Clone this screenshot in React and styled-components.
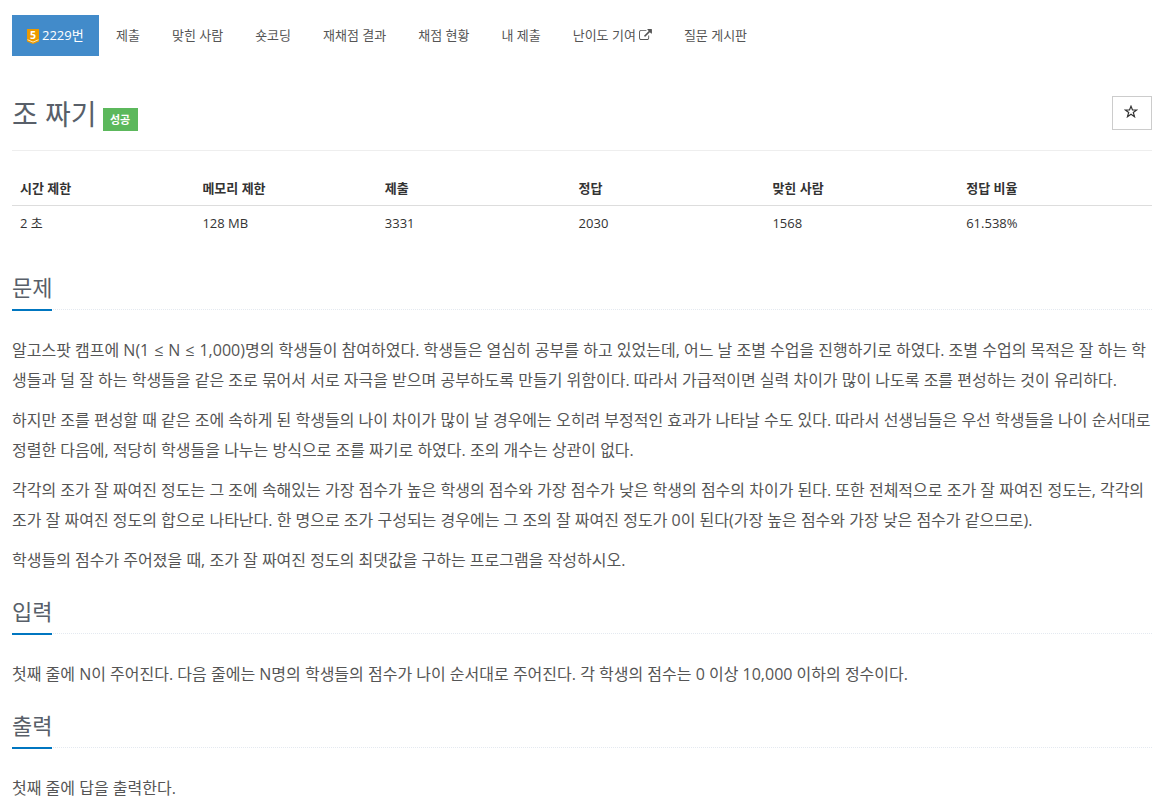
import React from 'react'
import styled, { createGlobalStyle } from 'styled-components'

const tabs = [
    { title: '제출' },
    { title: '맞힌 사람' },
    { title: '숏코딩' },
    { title: '재채점 결과' },
    { title: '채점 현황' },
    { title: '내 제출' },
    { title: '난이도 기여', external: true },
    { title: '질문 게시판' }
]

const limits = [
    { title: '시간 제한', value: '2 초', width: 16 },
    { title: '메모리 제한', value: '128 MB', width: 16 },
    { title: '제출', value: '3331', width: 17 },
    { title: '정답', value: '2030', width: 17 },
    { title: '맞힌 사람', value: '1568', width: 17 },
    { title: '정답 비율', value: '61.538%', width: 17 }
]

const sections = [
    {
        title: '문제',
        paragraphs: [
            '알고스팟 캠프에 N(1 ≤ N ≤ 1,000)명의 학생들이 참여하였다. 학생들은 열심히 공부를 하고 있었는데, 어느 날 조별 수업을 진행하기로 하였다. 조별 수업의 목적은 잘 하는 학생들과 덜 잘 하는 학생들을 같은 조로 묶어서 서로 자극을 받으며 공부하도록 만들기 위함이다. 따라서 가급적이면 실력 차이가 많이 나도록 조를 편성하는 것이 유리하다.',
            '하지만 조를 편성할 때 같은 조에 속하게 된 학생들의 나이 차이가 많이 날 경우에는 오히려 부정적인 효과가 나타날 수도 있다. 따라서 선생님들은 우선 학생들을 나이 순서대로 정렬한 다음에, 적당히 학생들을 나누는 방식으로 조를 짜기로 하였다. 조의 개수는 상관이 없다.',
            '각각의 조가 잘 짜여진 정도는 그 조에 속해있는 가장 점수가 높은 학생의 점수와 가장 점수가 낮은 학생의 점수의 차이가 된다. 또한 전체적으로 조가 잘 짜여진 정도는, 각각의 조가 잘 짜여진 정도의 합으로 나타난다. 한 명으로 조가 구성되는 경우에는 그 조의 잘 짜여진 정도가 0이 된다(가장 높은 점수와 가장 낮은 점수가 같으므로).',
            '학생들의 점수가 주어졌을 때, 조가 잘 짜여진 정도의 최댓값을 구하는 프로그램을 작성하시오.'
        ]
    },
    {
        title: '입력',
        paragraphs: ['첫째 줄에 N이 주어진다. 다음 줄에는 N명의 학생들의 점수가 나이 순서대로 주어진다. 각 학생의 점수는 0 이상 10,000 이하의 정수이다.']
    },
    {
        title: '출력',
        paragraphs: ['첫째 줄에 답을 출력한다.']
    }
]

const TierBadge = () => (
    <TierIcon viewBox="0 0 12 15">
        <path d="M0 0h12v12.400L6 15 0 12.400z" fill="#ec9a00" />
        <path d="M0.500 10.700L6 13.100l5.500-2.400" fill="none" stroke="#ffe9b8" />
        <text x="6" y="9.500" textAnchor="middle" fontSize="10.500" fontWeight="700" fill="#fff">5</text>
    </TierIcon>
)

const ExternalLink = () => (
    <LinkIcon viewBox="0 0 1792 1536">
        <path d="M1408 928v320q0 119-84.5 203.5T1120 1536H288q-119 0-203.5-84.5T0 1248V416q0-119 84.500-203.500T288 128h704q14 0 23 9t9 23v64q0 14-9 23t-23 9H288q-66 0-113 47t-47 113v832q0 66 47 113t113 47h832q66 0 113-47t47-113V928q0-14 9-23t23-9h64q14 0 23 9t9 23zM1792 64v512q0 26-19 45t-45 19-45-19l-176-176-652 652q-10 10-23 10t-23-10L695 983q-10-10-10-23t10-23l652-652-176-176q-19-19-19-45t19-45 45-19h512q26 0 45 19t19 45z" />
    </LinkIcon>
)

const Formula = ({ text }) => text.split(/(≤)/).map((part, i) =>
    part === '≤' ? <MathSign key={i}>{part}</MathSign> : part
)

const App = () => (
    <Page>
        <GlobalStyle />
        <Menu>
            <ActiveTab><TierBadge />2229번</ActiveTab>
            {tabs.map(t =>
                <Tab key={t.title}>{t.title}{t.external && <ExternalLink />}</Tab>
            )}
        </Menu>
        <TitleBar>
            <Title>조 짜기</Title>
            <ResultLabel>성공</ResultLabel>
            <FavoriteButton aria-label="즐겨찾기">
                <StarIcon viewBox="0 0 14 13">
                    <path d="M7 1.200L8.500 5H12.600L9.300 7.500 10.500 11.700 7 9.200 3.500 11.700 4.700 7.500 1.400 5H5.500Z" />
                </StarIcon>
            </FavoriteButton>
        </TitleBar>
        <LimitTable>
            <thead>
                <tr>
                    {limits.map(l => <LimitHead key={l.title} $width={l.width}>{l.title}</LimitHead>)}
                </tr>
            </thead>
            <tbody>
                <tr>
                    {limits.map(l => <LimitCell key={l.title}>{l.value}</LimitCell>)}
                </tr>
            </tbody>
        </LimitTable>
        {sections.map(s =>
            <section key={s.title}>
                <Headline><HeadlineText>{s.title}</HeadlineText></Headline>
                <SectionBody>
                    {s.paragraphs.map((p, i) => <Paragraph key={`p${i}`}><Formula text={p} /></Paragraph>)}
                </SectionBody>
            </section>
        )}
    </Page>
)

export default App

//Styled components
const GlobalStyle = createGlobalStyle`
  * {
    box-sizing: border-box;
  }
  body {
    margin: 0;
    background: #fff;
    color: #333;
    font-family: "Open Sans", "Noto Sans CJK KR", sans-serif;
    font-size: 13px;
    line-height: 20px;
  }
`;

const Page = styled.main`
  padding: 15px 13px 0 12px;
`;

const Menu = styled.nav`
  display: flex;
  gap: 2px;
  height: 41px;
`;

const Tab = styled.a`
  display: flex;
  align-items: center;
  gap: 3px;
  padding: 0 15px 2px;
  color: #555;
  white-space: nowrap;
`;

const ActiveTab = styled(Tab)`
  width: 87px;
  background: #428bca;
  color: #fff;
`;

const TierIcon = styled.svg`
  width: 12px;
  height: 15px;
  margin-top: 4px;
  overflow: visible;
`;

const LinkIcon = styled.svg`
  width: 13px;
  height: 11px;
  fill: #555;
`;

const TitleBar = styled.header`
  display: flex;
  align-items: flex-start;
  height: 95px;
  padding-top: 40px;
  border-bottom: 1px solid #eee;
`;

const Title = styled.h1`
  margin: 0 6px 0 0;
  color: #585f69;
  font-size: 28px;
  font-weight: 400;
  line-height: 36px;
`;

const ResultLabel = styled.span`
  width: 35px;
  height: 23px;
  margin-top: 12px;
  background: #5cb85c;
  color: #fff;
  font-size: 11px;
  font-weight: 700;
  line-height: 23px;
  text-align: center;
`;

const FavoriteButton = styled.button`
  display: flex;
  align-items: center;
  justify-content: center;
  width: 40px;
  height: 34px;
  margin-left: auto;
  padding: 0 2px 3px 0;
  border: 1px solid #ccc;
  background: #fff;
`;

const StarIcon = styled.svg`
  width: 14px;
  height: 13px;
  fill: none;
  stroke: #333;
  stroke-width: 1.2;
`;

const LimitTable = styled.table`
  width: 100%;
  margin: 19px 0 33px;
  border-collapse: collapse;
  table-layout: fixed;
`;

const LimitHead = styled.th`
  width: ${p => p.$width}%;
  padding: 9px 8px 7px;
  border-bottom: 1px solid #ddd;
  font-weight: 700;
  line-height: 19px;
  text-align: left;
`;

const LimitCell = styled.td`
  padding: 8px;
  line-height: 19px;
`;

const Headline = styled.div`
  display: flex;
  height: 36px;
  margin-top: 23px;
  border-bottom: 1px dotted #e4e9f0;
`;

const HeadlineText = styled.h2`
  height: 37px;
  margin: 0;
  border-bottom: 2px solid #0076c0;
  color: #585f69;
  font-size: 22px;
  font-weight: 400;
  line-height: 27px;
`;

const SectionBody = styled.div`
  padding-top: 25px;
`;

const Paragraph = styled.p`
  margin: 0 0 10px;
  color: #555;
  font-size: 16px;
  line-height: 30px;
`;

const MathSign = styled.span`
  padding: 0 0.8px;
`;
